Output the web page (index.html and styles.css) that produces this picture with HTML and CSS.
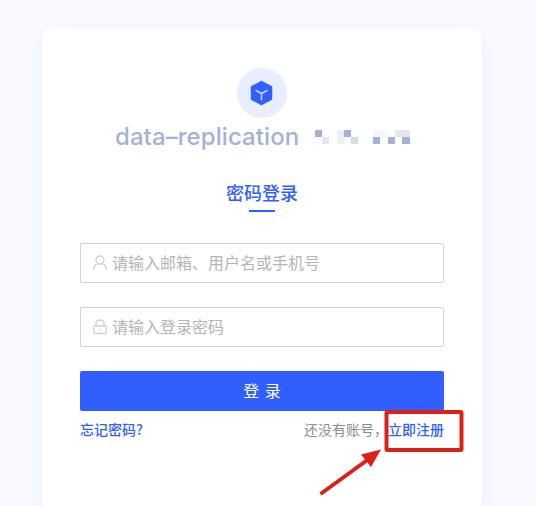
FILE: index.html
```html
<!DOCTYPE html>
<html lang="zh-CN">
<head>
<meta charset="utf-8">
<title>密码登录</title>
<link rel="stylesheet" href="styles.css">
</head>
<body>
<main class="card">
  <header class="brand">
    <div class="logo">
      <svg width="24" height="26" viewBox="0 0 24 26">
        <path class="cube" d="M11.500 2 21 7.200V18.800L11.500 24 2 18.800V7.200Z"/>
        <path class="cube-lines" d="M6 10.500 11.500 13.500 17 10.500M11.500 13.500V19.500"/>
      </svg>
    </div>
    <div class="title">
      <h1>data–replication</h1>
      <svg class="mosaic" width="95" height="14" viewBox="0 0 95 14">
        <g fill="#a3b2d7">
          <path d="M0 0h7v7H0zM29 0h7v7h-7zM58 7h7v7h-7zM73 7h7v7h-7zM87 7h8v7h-8z"/>
        </g>
        <path fill="#d3dced" d="M36 7h7v7h-7z"/>
        <path fill="#e2e7f3" d="M7 7h7v7H7zM80 0h15v7H80z"/>
        <path fill="#edf0f8" d="M22 0h7v14h-7z"/>
        <path fill="#f7f8fc" d="M58 0h15v7H58z"/>
      </svg>
    </div>
  </header>
  <h2 class="tab">密码登录</h2>
  <form class="form">
    <div class="field">
      <svg class="icon" width="16" height="16" viewBox="0 0 16 16">
        <circle cx="8" cy="5" r="4"/>
        <path d="M1.700 15C1.700 11.500 3.700 9.400 6 8.600M14.300 15C14.300 11.500 12.300 9.400 10 8.600"/>
      </svg>
      <span>请输入邮箱、用户名或手机号</span>
    </div>
    <div class="field">
      <svg class="icon" width="16" height="16" viewBox="0 0 16 16">
        <rect x="2" y="7" width="12" height="7.500" rx=".5"/>
        <path d="M4 7V4Q4 1 8 1T12 4V7M8 9.500V12"/>
      </svg>
      <span>请输入登录密码</span>
    </div>
    <button class="submit" type="button">登 录</button>
  </form>
  <div class="links">
    <a class="link">忘记密码?</a>
    <span class="hint">还没有账号，</span>
    <a class="link">立即注册</a>
  </div>
</main>
<svg class="callout" width="150" height="90" viewBox="0 0 150 90">
  <rect x="71.500" y="3" width="75" height="38" rx="1"/>
  <path d="M5.500 85 53 50.500"/>
  <path class="arrowhead" d="M66 40.500 46 45.500 56 58Z"/>
</svg>
</body>
</html>
```
FILE: styles.css
```css
* { box-sizing: border-box; }
body {
  margin: 0;
  height: 506px;
  overflow: hidden;
  padding: 29px 54px 0 42px;
  background: #f8faff;
  font-family: "Noto Sans CJK SC", sans-serif;
}
.card {
  height: 477px;
  padding: 39px 38px 0;
  border-radius: 10px 10px 0 0;
  background: #fff;
  box-shadow: 0 8px 16px rgba(80, 80, 255, .07);
}
.brand { display: flex; flex-direction: column; align-items: center; }
.logo {
  display: flex;
  align-items: center;
  justify-content: center;
  width: 50px;
  height: 50px;
  border-radius: 50%;
  background: #e8edff;
}
.cube { fill: #315fff; stroke: #315fff; stroke-width: 2.500; stroke-linejoin: round; }
.cube-lines { fill: none; stroke: #c4d1ff; stroke-width: 1.600; stroke-linecap: round; }
.title {
  display: flex;
  align-items: center;
  align-self: flex-start;
  height: 38px;
  padding-left: 35px;
}
h1 {
  margin: 0;
  width: 200px;
  font: 500 24px/36px Inter, sans-serif;
  letter-spacing: .07px;
  color: #a3b2d7;
  white-space: nowrap;
}
.tab {
  width: 72px;
  height: 32px;
  margin: 23px auto 0;
  font-size: 18px;
  line-height: 26px;
  font-weight: 500;
  color: #315fff;
}
.tab::after {
  content: "";
  display: block;
  width: 26px;
  height: 2px;
  margin: 5px auto 0;
  background: #315fff;
}
.form { display: flex; flex-direction: column; gap: 24px; margin-top: 32px; }
.field {
  display: flex;
  align-items: center;
  gap: 4px;
  height: 40px;
  padding: 0 11px;
  border: 1px solid #d2d2d2;
  border-radius: 2px;
  font-size: 16px;
  line-height: 36px;
  color: #b5b5b5;
}
.field span { height: 38px; }
.icon { fill: none; stroke: #d0d0d0; stroke-width: 1.300; }
.submit {
  height: 40px;
  padding: 0 0 2px;
  border: 0;
  border-radius: 2px;
  background: #315fff;
  color: #fff;
  font: 400 16px/38px "Noto Sans CJK SC", sans-serif;
  word-spacing: 2px;
}
.links {
  display: flex;
  height: 40px;
  font-size: 14px;
  line-height: 36px;
  color: #315fff;
  white-space: nowrap;
}
.link { font-weight: 500; }
.hint { margin-left: auto; color: #8c8c8c; }
.callout { position: absolute; left: 315px; top: 409px; fill: none; stroke: #db2015; stroke-width: 4; }
.arrowhead { fill: #db2015; stroke: none; }
```
